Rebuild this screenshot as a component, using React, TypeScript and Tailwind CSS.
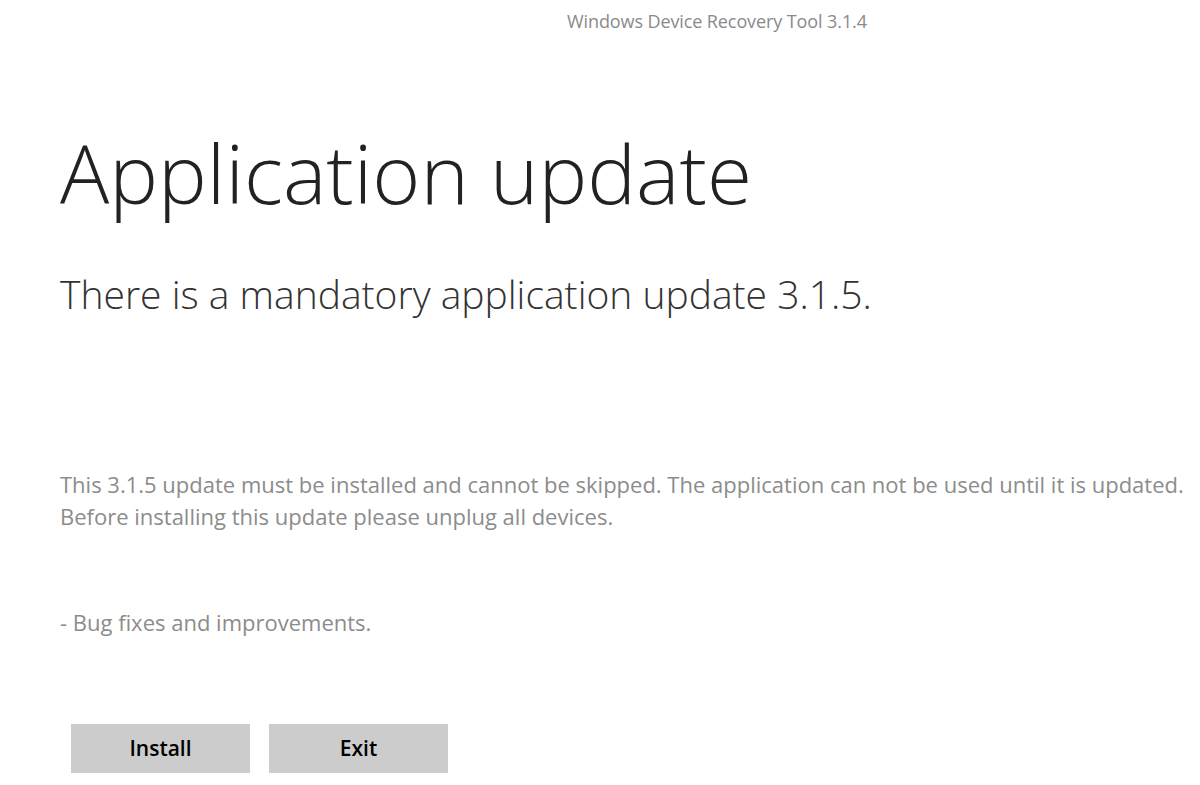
export default function App() {
  return (
    <div className="w-[1200px] h-[785px] bg-white overflow-hidden flex flex-col" style={{ fontFamily: '"Open Sans", "Noto Sans", sans-serif' }}>
      <div className="h-[42px] flex items-center pl-[567px]">
        <span className="text-[18px] text-[#8a8a8a] tracking-[-0.1px]">Windows Device Recovery Tool 3.1.4</span>
      </div>
      <div className="pl-[60px] pt-[82px] flex flex-col">
        <h1 className="text-[82px] leading-[96px] font-light text-[#222]">Application update</h1>
        <p className="mt-[50px] text-[39px] leading-[48px] font-light text-[#333]">There is a mandatory application update 3.1.5.</p>
        <div className="mt-[150px] text-[22px] leading-[32px] text-[#8c8c8c]">
          <p>This 3.1.5 update must be installed and cannot be skipped. The application can not be used until it is updated.</p>
          <p>Before installing this update please unplug all devices.</p>
        </div>
        <p className="mt-[74px] text-[22px] leading-[32px] text-[#8c8c8c]">- Bug fixes and improvements.</p>
      </div>
      <div className="pl-[71px] mt-[86px] flex gap-[19px]">
        <button className="w-[179px] h-[49px] bg-[#cccccc] text-[21px] font-semibold text-black">Install</button>
        <button className="w-[179px] h-[49px] bg-[#cccccc] text-[21px] font-semibold text-black">Exit</button>
      </div>
    </div>
  );
}
